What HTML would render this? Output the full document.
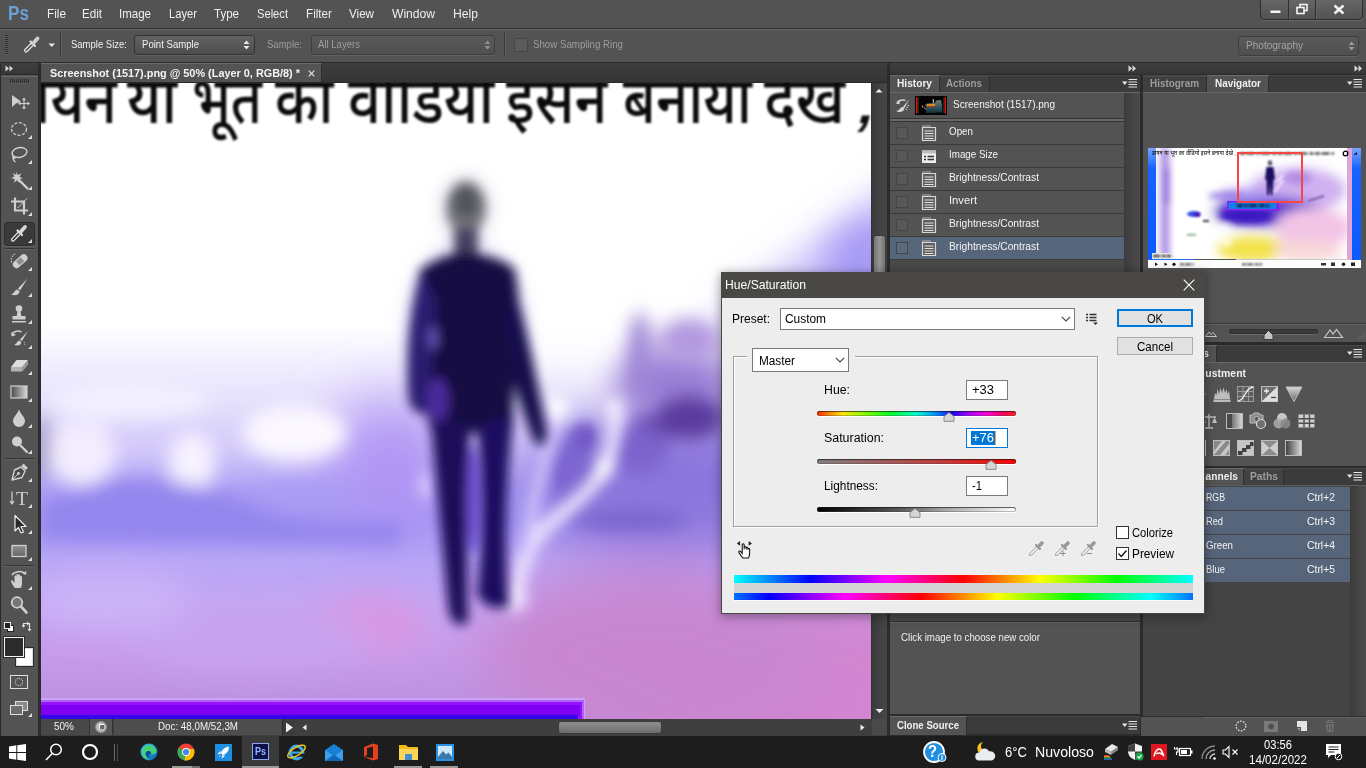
<!DOCTYPE html>
<html lang="en">
<head>
<meta charset="utf-8">
<title>Photoshop - Hue/Saturation</title>
<style>
*{box-sizing:border-box;margin:0;padding:0}
html,body{width:1366px;height:768px;overflow:hidden;background:#535353}
body{position:relative;font-family:"Liberation Sans","Noto Sans Devanagari","Noto Sans Devanagari UI","Lohit Devanagari","FreeSans",sans-serif;font-size:11px;color:#e4e4e4;-webkit-font-smoothing:antialiased}
.a{position:absolute}
.t{position:absolute;white-space:nowrap;line-height:1;transform-origin:0 0}
svg{position:absolute;overflow:visible}
/* ---------- menu bar ---------- */
#menubar{left:0;top:0;width:1366px;height:28px;background:#535353}
#menubar .m{font-size:13px;color:#efefef;top:7px}
#winctl{left:1260px;top:-1px;width:103px;height:21px;border:1px solid #2e2e2e;border-radius:0 0 4px 4px;background:linear-gradient(#666,#525252);box-shadow:0 1px 0 #686868}
/* ---------- options bar ---------- */
#optbar{left:0;top:28px;width:1366px;height:35px;background:#535353;border-top:1px solid #2f2f2f;border-bottom:1px solid #2b2b2b;box-shadow:inset 0 1px 0 #6a6a6a}
.dd{position:absolute;height:20px;border:1px solid #333;border-radius:3px;background:linear-gradient(#636363,#4c4c4c);box-shadow:0 1px 0 #626262}
.dd.dis{background:linear-gradient(#5a5a5a,#4f4f4f);border-color:#3e3e3e}
/* ---------- doc area ---------- */
#tabrow{left:39px;top:63px;width:848px;height:20px;background:linear-gradient(#3d3d3d,#353535)}
#doctab{left:41px;top:63px;width:281px;height:20px;background:#535353;border-top:1px solid #6e6e6e;border-right:1px solid #2e2e2e}
#canvas{left:41px;top:83px;width:830px;height:636px;background:#fff;overflow:hidden}
#vscroll{left:871px;top:83px;width:16px;height:636px;background:linear-gradient(90deg,#2f2f2f 0,#3c3c3c 2px,#474747 100%)}
#status{left:39px;top:719px;width:848px;height:17px;background:#3f3f3f}
/* ---------- toolbar ---------- */
#tools{left:0;top:62px;width:41px;height:674px;background:#2b2b2b}
#tools .in{left:1px;top:1px;width:37px;height:673px;background:#535353}
#tools .hd{left:1px;top:1px;width:37px;height:12px;background:linear-gradient(#3f3f3f,#383838);border-bottom:1px solid #2c2c2c}
/* ---------- taskbar ---------- */
#taskbar{left:0;top:736px;width:1366px;height:32px;background:#1d1d1d}
#taskbar .t{color:#fff}
/* ---------- panels ---------- */
.strip{position:absolute;height:11px;background:linear-gradient(#3e3e3e,#363636)}
/* ---------- dialog ---------- */
.inp{position:absolute;background:#fff;border:1px solid #7a7a7a}
.btn{position:absolute;background:#e1e1e1;border:1px solid #adadad}
</style>
</head>
<body>
<div class="a" id="menubar">
  <span class="t" id="ps" style="left:8px;top:3px;font-size:20px;font-weight:bold;color:#6c9fd4;width:21px;transform:scaleX(0.8582)">Ps</span>
  <span class="t m" style="left:47px;width:19px;transform:scaleX(0.9068)">File</span>
  <span class="t m" style="left:82px;width:20px;transform:scaleX(0.8926)">Edit</span>
  <span class="t m" style="left:119px;width:32px;transform:scaleX(0.8854)">Image</span>
  <span class="t m" style="left:169px;width:28px;transform:scaleX(0.8607)">Layer</span>
  <span class="t m" style="left:214px;width:25px;transform:scaleX(0.8869)">Type</span>
  <span class="t m" style="left:257px;width:31px;transform:scaleX(0.8578)">Select</span>
  <span class="t m" style="left:306px;width:26px;transform:scaleX(0.8999)">Filter</span>
  <span class="t m" style="left:349px;width:25px;transform:scaleX(0.8944)">View</span>
  <span class="t m" style="left:392px;width:43px;transform:scaleX(0.9297)">Window</span>
  <span class="t m" style="left:453px;width:25px;transform:scaleX(0.9346)">Help</span>
  <div class="a" id="winctl">
    <div class="a" style="left:27px;top:0;width:1px;height:19px;background:#2e2e2e;box-shadow:1px 0 0 #646464"></div>
    <div class="a" style="left:54px;top:0;width:1px;height:19px;background:#2e2e2e;box-shadow:1px 0 0 #646464"></div>
    <svg style="left:0;top:0" width="102" height="20" viewBox="0 0 102 20">
      <rect x="9.500" y="10.500" width="10" height="2.500" fill="#f4f4f4"/>
      <rect x="39" y="4.500" width="7" height="6" fill="none" stroke="#f4f4f4" stroke-width="1.600"/>
      <rect x="36" y="7.500" width="7" height="6" fill="#555" stroke="#f4f4f4" stroke-width="1.600"/>
      <path d="M73.500 5.500 L82.500 13.500 M82.500 5.500 L73.500 13.500" stroke="#f4f4f4" stroke-width="2.400" fill="none"/>
    </svg>
  </div>
</div>
<div class="a" id="optbar">
  <!-- grip -->
  <div class="a" style="left:5px;top:6px;width:3px;height:20px;background:repeating-linear-gradient(#2e2e2e 0,#2e2e2e 1px,#5e5e5e 1px,#5e5e5e 2px)"></div>
  <!-- eyedropper -->
  <svg style="left:22px;top:6px" width="20" height="20" viewBox="0 0 20 20">
    <path d="M3.200 16.800 L2.500 15 L9.500 8 L11.500 10 L4.500 17 Z" fill="#4b4b4b" stroke="#e6e6e6" stroke-width="1.200" stroke-linejoin="round"/>
    <path d="M8.500 6.500 L13 11" stroke="#dcdcdc" stroke-width="2.200" stroke-linecap="round"/>
    <path d="M11 8.500 L15.500 3.500" stroke="#cfcfcf" stroke-width="3.800" stroke-linecap="round"/>
  </svg>
  <svg style="left:48px;top:14px" width="8" height="5" viewBox="0 0 8 5"><path d="M0.500 0.500 L7 0.500 L3.750 4 Z" fill="#e8e8e8"/></svg>
  <div class="a" style="left:60px;top:4px;width:1px;height:24px;background:#3a3a3a;box-shadow:1px 0 0 #606060"></div>
  <span class="t" style="left:71px;top:10px;font-size:11px;color:#f0f0f0;width:56px;transform:scaleX(0.8640)">Sample Size:</span>
  <div class="dd" style="left:134px;top:6px;width:121px"></div>
  <span class="t" style="left:142px;top:10px;font-size:11px;color:#f0f0f0;width:57px;transform:scaleX(0.8711)">Point Sample</span>
  <svg style="left:243px;top:11px" width="7" height="10" viewBox="0 0 7 10"><path d="M0.500 4 L3.500 0.500 L6.500 4 Z M0.500 6 L3.500 9.500 L6.500 6 Z" fill="#e8e8e8"/></svg>
  <span class="t" style="left:267px;top:10px;font-size:11px;color:#9d9d9d;width:35px;transform:scaleX(0.8672)">Sample:</span>
  <div class="dd dis" style="left:311px;top:6px;width:184px"></div>
  <span class="t" style="left:318px;top:10px;font-size:11px;color:#9d9d9d;width:42px;transform:scaleX(0.8696)">All Layers</span>
  <svg style="left:484px;top:11px" width="7" height="10" viewBox="0 0 7 10"><path d="M0.500 4 L3.500 0.500 L6.500 4 Z M0.500 6 L3.500 9.500 L6.500 6 Z" fill="#8f8f8f"/></svg>
  <div class="a" style="left:504px;top:4px;width:1px;height:24px;background:#3a3a3a;box-shadow:1px 0 0 #606060"></div>
  <div class="a" style="left:514px;top:9px;width:14px;height:14px;border:1px solid #464646;border-radius:2px;background:#5b5b5b"></div>
  <span class="t" style="left:533px;top:10px;font-size:11px;color:#9d9d9d;width:90px;transform:scaleX(0.8813)">Show Sampling Ring</span>
  <div class="dd dis" style="left:1238px;top:7px;width:121px"></div>
  <span class="t" style="left:1246px;top:11px;font-size:11px;color:#a4a4a4;width:57px;transform:scaleX(0.9136)">Photography</span>
  <svg style="left:1348px;top:12px" width="7" height="10" viewBox="0 0 7 10"><path d="M0.500 4 L3.500 0.500 L6.500 4 Z M0.500 6 L3.500 9.500 L6.500 6 Z" fill="#9a9a9a"/></svg>
</div>
<div class="a" id="tabrow"></div>
<div class="a" id="doctab">
  <span class="t" style="left:9px;top:4px;font-size:11px;font-weight:bold;color:#f4f4f4;width:250px;transform:scaleX(0.9889)">Screenshot (1517).png @ 50% (Layer 0, RGB/8) *</span>
  <svg style="left:267px;top:6px" width="7" height="7" viewBox="0 0 7 7"><path d="M0.700 0.700 L6.300 6.300 M6.300 0.700 L0.700 6.300" stroke="#e4e4e4" stroke-width="1.150"/></svg>
</div>
<div class="a" style="left:39px;top:82px;width:848px;height:1px;background:#282828"></div>
<div class="a" id="canvas">
<!--ART_BEGIN-->
<svg style="left:0;top:0" width="830" height="636" viewBox="41 83 830 636">
  <defs>
    <linearGradient id="bgv" x1="0" y1="83" x2="0" y2="719" gradientUnits="userSpaceOnUse">
      <stop offset="0" stop-color="#ffffff"/>
      <stop offset="0.380" stop-color="#ffffff"/>
      <stop offset="0.435" stop-color="#f3f0ff"/>
      <stop offset="0.500" stop-color="#e6e0fc"/>
      <stop offset="0.577" stop-color="#d2c8fa"/>
      <stop offset="0.640" stop-color="#aea0f4"/>
      <stop offset="0.690" stop-color="#a496f3"/>
      <stop offset="0.750" stop-color="#b8a6f6"/>
      <stop offset="0.815" stop-color="#c4a6f3"/>
      <stop offset="0.890" stop-color="#c89cea"/>
      <stop offset="0.970" stop-color="#bd92e2"/>
      <stop offset="1" stop-color="#bd92e2"/>
    </linearGradient>
    <linearGradient id="tr" x1="765" y1="160" x2="868" y2="296" gradientUnits="userSpaceOnUse">
      <stop offset="0" stop-color="#b0a0f6" stop-opacity="0"/>
      <stop offset="0.500" stop-color="#c4b6fa" stop-opacity=".5"/>
      <stop offset="1" stop-color="#a494f4" stop-opacity="1"/>
    </linearGradient>
    <filter id="b30" x="-50%" y="-50%" width="200%" height="200%"><feGaussianBlur stdDeviation="30"/></filter>
    <filter id="b18" x="-50%" y="-50%" width="200%" height="200%"><feGaussianBlur stdDeviation="16"/></filter>
    <filter id="b10" x="-50%" y="-50%" width="200%" height="200%"><feGaussianBlur stdDeviation="9"/></filter>
    <filter id="b6" x="-50%" y="-50%" width="200%" height="200%"><feGaussianBlur stdDeviation="5.500"/></filter>
    <filter id="b7" x="-50%" y="-50%" width="200%" height="200%"><feGaussianBlur stdDeviation="7"/></filter>
  </defs>
  <rect x="41" y="83" width="830" height="636" fill="url(#bgv)"/>
  <!-- large soft colour fields -->
  <g filter="url(#b30)">
    <ellipse cx="790" cy="690" rx="230" ry="100" fill="#d285d0"/>
    <ellipse cx="650" cy="655" rx="170" ry="90" fill="#c886d0"/>
    <ellipse cx="670" cy="480" rx="150" ry="65" fill="#8a74dc"/>
    <ellipse cx="620" cy="270" rx="150" ry="100" fill="#ffffff"/>
    <ellipse cx="390" cy="470" rx="60" ry="70" fill="#b094f4"/>
  </g>
  <polygon points="880,185 910,185 910,340 720,340 720,305" fill="url(#tr)" filter="url(#b18)"/>
  <ellipse cx="880" cy="262" rx="52" ry="42" fill="#a79bf5" filter="url(#b18)"/>
  <g filter="url(#b18)">
    <ellipse cx="675" cy="385" rx="60" ry="40" fill="#9a7ed6"/>
    <ellipse cx="110" cy="600" rx="80" ry="28" fill="#ccb4f8"/>
    <ellipse cx="370" cy="625" rx="55" ry="28" fill="#d896e2"/>
    <ellipse cx="250" cy="640" rx="120" ry="26" fill="#c8a4f0"/>
  </g>
  <g filter="url(#b10)">
    <ellipse cx="295" cy="433" rx="52" ry="28" fill="#fbf8ff"/>
    <ellipse cx="192" cy="462" rx="24" ry="30" fill="#f6f2ff"/>
    <ellipse cx="82" cy="452" rx="34" ry="34" fill="#f2ecff"/>
    <ellipse cx="130" cy="400" rx="80" ry="18" fill="#f3f0ff"/>
    <path d="M41 505 Q90 478 150 480 Q210 484 270 512 Q320 528 400 520 L400 545 L41 540 Z" fill="#9486ee"/>
    <ellipse cx="300" cy="497" rx="55" ry="12" fill="#a99cf4"/>
    <ellipse cx="42" cy="447" rx="7" ry="32" fill="#8e86b4"/>
  </g>
  <!-- distant shapes right of figure -->
  <g filter="url(#b10)">
    <ellipse cx="650" cy="432" rx="20" ry="18" fill="#6a4ab0"/>
    <ellipse cx="690" cy="418" rx="34" ry="22" fill="#5a3a9e"/>
    <ellipse cx="640" cy="352" rx="11" ry="40" fill="#9c84d4"/>
    <ellipse cx="690" cy="340" rx="30" ry="22" fill="#b49ae0"/>
    <ellipse cx="630" cy="520" rx="60" ry="10" fill="#7464cc"/>
    <ellipse cx="575" cy="470" rx="22" ry="40" fill="#7b66d2"/>
    <ellipse cx="640" cy="450" rx="30" ry="22" fill="#7a62cc"/>
  </g>
  <g filter="url(#b7)">
    <path d="M616 408 Q614 445 606 466 Q590 492 566 510 Q540 530 530 548 Q520 568 516 594" fill="none" stroke="#ece4ff" stroke-width="14" stroke-linecap="round"/>
    <path d="M558 410 Q548 450 536 492 Q530 520 527 548" fill="none" stroke="#d8caff" stroke-width="10" stroke-linecap="round"/>
    <ellipse cx="604" cy="468" rx="9" ry="12" fill="#ffffff"/>
    <ellipse cx="557" cy="408" rx="10" ry="12" fill="#ffffff"/>
    <ellipse cx="614" cy="408" rx="9" ry="10" fill="#f6f0ff"/>
    <ellipse cx="426" cy="486" rx="6" ry="13" fill="#dccfff"/>
    <ellipse cx="514" cy="598" rx="13" ry="14" fill="#efe4ff"/>
    <ellipse cx="585" cy="437" rx="13" ry="14" fill="#6f54c4"/>
    <ellipse cx="562" cy="470" rx="9" ry="16" fill="#7d62d0"/>
  </g>
  <!-- figure -->
  <g filter="url(#b10)">
    <ellipse cx="466" cy="208" rx="27" ry="34" fill="#e9e9f2"/>
    <ellipse cx="466" cy="330" rx="62" ry="90" fill="#cfc6f4" opacity=".55"/>
  </g>
  <g filter="url(#b6)">
    <ellipse cx="466" cy="208" rx="20" ry="27" fill="#74747e"/>
    <ellipse cx="466" cy="202" rx="13" ry="16" fill="#55555f"/>
    <path d="M454 228 h24 v30 h-24 Z" fill="#45415f"/>
    <path d="M454 254 Q466 250 478 254 Q500 258 514 268 Q522 300 516 350 L512 425 Q490 436 466 432 Q440 436 428 425 L424 350 Q414 300 420 270 Q436 258 454 254 Z" fill="#120a42"/>
    <path d="M421 270 Q404 325 408 398 Q414 420 430 412 L436 300 Z" fill="#2a1c70"/>
    <path d="M509 268 Q526 320 546 428 Q548 448 536 444 Q514 400 502 320 Z" fill="#170e4c"/>
    <path d="M430 415 Q440 520 448 606 Q452 632 468 622 Q466 520 470 425 Z" fill="#1a0f58"/>
    <path d="M477 425 Q486 520 477 594 Q486 612 509 607 Q501 520 514 415 Z" fill="#1c1060"/>
    <ellipse cx="473" cy="500" rx="6" ry="55" fill="#6e50d6"/>
    <ellipse cx="433" cy="338" rx="4" ry="12" fill="#6a58c0"/>
    <ellipse cx="438" cy="400" rx="11" ry="22" fill="#4a2a9c"/>
  </g>
  <!-- bottom violet strip -->
  <rect x="41" y="698" width="544" height="21" fill="#caa4f6"/>
  <rect x="41" y="700" width="543" height="19" fill="#b060fc"/>
  <rect x="41" y="702" width="541" height="17" fill="#9412fc"/>
  <rect x="41" y="705" width="539" height="10" fill="#8000f4"/>
  <rect x="41" y="715" width="537" height="4" fill="#3008ea"/>
</svg>
<div class="a" id="hindi" style="left:0;top:0;width:830px;height:70px;color:#0b0b0b;font-size:64px;font-weight:480;filter:blur(1px)">
 <span class="t" style="left:-37px;top:-15px;--sy:1.02;width:113px;transform:scale(0.8903,1.02)">डायन</span>
 <span class="t" style="left:86.0px;top:-15px;--sy:1.02;width:50px;transform:scale(0.9029,1.02)">या</span>
 <span class="t" style="left:151.0px;top:-15px;--sy:1.02;width:70px;transform:scale(0.8343,1.02)">भूत</span>
 <span class="t" style="left:233.6px;top:-15px;--sy:1.02;width:58.4px;transform:scale(0.8648,1.02)">का</span>
 <span class="t" style="left:307.0px;top:-15px;--sy:1.02;width:146px;transform:scale(0.9060,1.02)">वीडियो</span>
 <span class="t" style="left:464.5px;top:-15px;--sy:1.02;width:101.5px;transform:scale(0.8975,1.02)">इसने</span>
 <span class="t" style="left:581.5px;top:-15px;--sy:1.02;width:129px;transform:scale(0.8793,1.02)">बनाया</span>
 <span class="t" style="left:723.0px;top:-15px;--sy:1.02;width:81px;transform:scale(0.9205,1.02)">देखे</span>
 <span class="t" style="left:828px;top:-19px;font-size:70px;transform:skewX(-16deg) scaleX(1.2)">,</span>
</div>
<!--ART_END-->
</div>
<div class="a" id="vscroll">
  <svg style="left:4px;top:5px" width="8" height="5" viewBox="0 0 8 5"><path d="M0.500 4.500 L4 1 L7.500 4.500 Z" fill="#f0f0f0"/></svg>
  <div class="a" style="left:2px;top:152px;width:13px;height:60px;border-radius:3px;background:linear-gradient(90deg,#767676,#959595 50%,#747474);border:1px solid #3a3a3a"></div>
  <svg style="left:4px;top:625px" width="9" height="6" viewBox="0 0 9 6"><path d="M0.500 1 L4.500 5 L8.500 1 Z" fill="#f0f0f0"/></svg>
</div>
<div class="a" id="status">
  <div class="a" style="left:2px;top:0;width:48px;height:16px;background:#484848"></div>
  <span class="t" style="left:15px;top:3px;font-size:10px;color:#f2f2f2;width:20px;transform:scaleX(0.9992)">50%</span>
  <div class="a" style="left:50px;top:0;width:24px;height:16px;background:#565656;border-left:1px solid #333;border-right:1px solid #333"></div>
  <div class="a" style="left:56px;top:2px;width:12px;height:12px;border-radius:50%;background:#b9b9b9;border:1px solid #8a8a8a"></div>
  <div class="a" style="left:60px;top:5px;width:5px;height:5px;background:#6a6a6a;border-top:1px solid #fff;border-left:1px solid #fff"></div>
  <div class="a" style="left:75px;top:0;width:168px;height:16px;background:#4d4d4d"></div>
  <span class="t" style="left:119px;top:3px;font-size:10px;color:#f2f2f2;width:80px;transform:scaleX(0.9790)">Doc: 48,0M/52,3M</span>
  <div class="a" style="left:243px;top:0;width:13px;height:16px;background:#3b3b3b;border-left:1px solid #2a2a2a"></div>
  <svg style="left:246px;top:3px" width="9" height="11" viewBox="0 0 9 11"><path d="M1 0.500 L8 5.500 L1 10.500 Z" fill="#f2f2f2"/></svg>
  <svg style="left:263px;top:5px" width="5" height="7" viewBox="0 0 5 7"><path d="M4.500 0.500 L0.500 3.500 L4.500 6.500 Z" fill="#f0f0f0"/></svg>
  <div class="a" style="left:519px;top:2px;width:104px;height:13px;border-radius:3px;background:linear-gradient(#8e8e8e,#6c6c6c);border:1px solid #3a3a3a"></div>
  <svg style="left:821px;top:5px" width="5" height="7" viewBox="0 0 5 7"><path d="M0.500 0.500 L4.500 3.500 L0.500 6.500 Z" fill="#f0f0f0"/></svg>
  <div class="a" style="left:833px;top:0;width:15px;height:16px;background:#4a4a4a"></div>
</div>
<div class="a" id="tools">
 <div class="a in"></div>
 <div class="a hd"></div>
 <div class="a" style="left:1px;top:14px;width:37px;height:1px;background:#6a6a6a"></div>
 <svg style="left:5px;top:3px" width="9" height="7" viewBox="0 0 9 7"><path d="M0.500 0.500 L4 3.500 L0.500 6.500 Z M4.500 0.500 L8 3.500 L4.500 6.500 Z" fill="#d8d8d8"/></svg>
 <div class="a" style="left:10px;top:17px;width:20px;height:4px;background:repeating-linear-gradient(90deg,#2e2e2e 0,#2e2e2e 1px,transparent 1px,transparent 2px);box-shadow:0 1px 0 rgba(255,255,255,.08)"></div>
 <div class="a" style="left:4px;top:160px;width:31px;height:24px;border-radius:3px;background:#3a3a3a;border:1px solid #2c2c2c;box-shadow:0 1px 0 #666"></div>
 <div class="a" style="left:5px;top:186px;width:29px;height:1px;background:#333;box-shadow:0 1px 0 #626262"></div>
 <div class="a" style="left:5px;top:396px;width:29px;height:1px;background:#333;box-shadow:0 1px 0 #626262"></div>
 <div class="a" style="left:5px;top:503px;width:29px;height:1px;background:#333;box-shadow:0 1px 0 #626262"></div>
 <svg style="left:7px;top:28px" width="24" height="24" viewBox="0 0 24 24"><path d="M5 5 L5 17 L9 13.500 L14 11.500 Z" fill="#cfcfcf"/><path d="M17 9 v9 M12.500 13.500 h9" stroke="#cfcfcf" stroke-width="1.200" fill="none"/><path d="M17 7.500 l-2 2.500 h4 Z M17 19.500 l-2 -2.500 h4 Z M11 13.500 l2.500 -2 v4 Z M23 13.500 l-2.500 -2 v4 Z" fill="#cfcfcf"/></svg>
 <svg style="left:7px;top:55px" width="24" height="24" viewBox="0 0 24 24"><ellipse cx="12" cy="12" rx="7.500" ry="6.300" fill="none" stroke="#cfcfcf" stroke-width="1.300" stroke-dasharray="3 1.600"/></svg>
 <svg style="left:28px;top:73px" width="4" height="4" viewBox="0 0 4 4"><path d="M4 0 V4 H0 Z" fill="#dcdcdc"/></svg>
 <svg style="left:7px;top:80px" width="24" height="24" viewBox="0 0 24 24"><ellipse cx="12.500" cy="10.500" rx="7.500" ry="4.800" fill="none" stroke="#cfcfcf" stroke-width="1.500" transform="rotate(-12 12.500 10.500)"/><path d="M7 13.500 c-2.500 1.500 -1 3.500 0.500 3 c1.500 -0.500 0 -2.500 -1 -1 c-0.800 1.500 0.500 3.500 2 4.500" fill="none" stroke="#cfcfcf" stroke-width="1.200"/></svg>
 <svg style="left:28px;top:98px" width="4" height="4" viewBox="0 0 4 4"><path d="M4 0 V4 H0 Z" fill="#dcdcdc"/></svg>
 <svg style="left:7px;top:106px" width="24" height="24" viewBox="0 0 24 24"><path d="M12 12 L20.500 20.500" stroke="#cfcfcf" stroke-width="2.400" stroke-linecap="round"/><path d="M9.500 3.500 l1.200 3.600 l3.600 -1.600 l-1.800 3.300 l3.500 1.700 l-3.800 0.600 l0.400 3.900 l-2.700 -2.800 l-2.900 2.600 l0.800 -3.800 l-3.800 -0.900 l3.500 -1.500 l-1.700 -3.500 l3.400 1.800 Z" fill="#cfcfcf"/></svg>
 <svg style="left:28px;top:124px" width="4" height="4" viewBox="0 0 4 4"><path d="M4 0 V4 H0 Z" fill="#dcdcdc"/></svg>
 <svg style="left:7px;top:132px" width="24" height="24" viewBox="0 0 24 24"><path d="M8 3.500 V16.500 H21 M4 7.500 H17 V20.500" fill="none" stroke="#cfcfcf" stroke-width="2.200"/><path d="M10.500 14 L20 4.500" stroke="#cfcfcf" stroke-width="1"/></svg>
 <svg style="left:28px;top:150px" width="4" height="4" viewBox="0 0 4 4"><path d="M4 0 V4 H0 Z" fill="#dcdcdc"/></svg>
 <svg style="left:7px;top:159px" width="24" height="24" viewBox="0 0 24 24"><path d="M5 20 L4.500 18.200 L11.500 11 L13.500 13 L6.500 20.200 Z" fill="#3a3a3a" stroke="#ececec" stroke-width="1.200" stroke-linejoin="round"/><path d="M10.500 9.500 L15 14" stroke="#e0e0e0" stroke-width="2.200" stroke-linecap="round"/><path d="M13.500 11 L18 6" stroke="#d6d6d6" stroke-width="3.800" stroke-linecap="round"/></svg>
 <svg style="left:28px;top:177px" width="4" height="4" viewBox="0 0 4 4"><path d="M4 0 V4 H0 Z" fill="#dcdcdc"/></svg>
 <svg style="left:7px;top:187px" width="24" height="24" viewBox="0 0 24 24"><g transform="rotate(-42 13 12)"><rect x="4.500" y="8.500" width="17" height="7.500" rx="3.500" fill="#cfcfcf"/><rect x="10" y="9.500" width="6" height="5.500" fill="#8e8e8e"/></g><path d="M8 5 a5 6 0 0 0 -3 9" fill="none" stroke="#cfcfcf" stroke-width="1.200" stroke-dasharray="1.500 1.300"/></svg>
 <svg style="left:28px;top:205px" width="4" height="4" viewBox="0 0 4 4"><path d="M4 0 V4 H0 Z" fill="#dcdcdc"/></svg>
 <svg style="left:7px;top:213px" width="24" height="24" viewBox="0 0 24 24"><path d="M20.500 3.500 L11 13.500 L13 15.500 Z" fill="#cfcfcf"/><path d="M10.500 14.500 c-3 0.500 -3 4 -6.500 5 c4 1.500 8.500 0.500 8.500 -3 Z" fill="#cfcfcf"/></svg>
 <svg style="left:28px;top:231px" width="4" height="4" viewBox="0 0 4 4"><path d="M4 0 V4 H0 Z" fill="#dcdcdc"/></svg>
 <svg style="left:7px;top:240px" width="24" height="24" viewBox="0 0 24 24"><circle cx="12" cy="6.500" r="3.300" fill="#cfcfcf"/><path d="M10.500 9 h3 l0.800 5 h4.200 v3.500 h-13 v-3.500 h4.200 Z" fill="#cfcfcf"/><rect x="5" y="19" width="14" height="1.500" fill="#cfcfcf"/></svg>
 <svg style="left:28px;top:258px" width="4" height="4" viewBox="0 0 4 4"><path d="M4 0 V4 H0 Z" fill="#dcdcdc"/></svg>
 <svg style="left:7px;top:265px" width="24" height="24" viewBox="0 0 24 24"><path d="M21 4 L13 12.500 L14.800 14.200 Z" fill="#cfcfcf"/><path d="M12.500 13.500 c-2.500 0.500 -2.500 3.500 -5.500 4.300 c3.500 1.300 7.300 0.400 7.300 -2.600 Z" fill="#cfcfcf"/><path d="M5 8.500 a6 5 0 0 1 9.500 -3.500" fill="none" stroke="#cfcfcf" stroke-width="1.500"/><path d="M4 5 l1 4.500 l4 -1.500 Z" fill="#cfcfcf"/><path d="M17 15 l1.500 4" stroke="#cfcfcf" stroke-width="1" stroke-dasharray="1 1"/></svg>
 <svg style="left:28px;top:283px" width="4" height="4" viewBox="0 0 4 4"><path d="M4 0 V4 H0 Z" fill="#dcdcdc"/></svg>
 <svg style="left:7px;top:291px" width="24" height="24" viewBox="0 0 24 24"><path d="M9.500 7 H21 L15.500 14 H4 Z" fill="#dedede"/><path d="M4 14 H15.500 V18.500 H4 Z" fill="#b3b3b3"/><path d="M15.500 14 L21 7 V11.500 L15.500 18.500 Z" fill="#9b9b9b"/></svg>
 <svg style="left:28px;top:309px" width="4" height="4" viewBox="0 0 4 4"><path d="M4 0 V4 H0 Z" fill="#dcdcdc"/></svg>
 <svg style="left:7px;top:318px" width="24" height="24" viewBox="0 0 24 24"><defs><linearGradient id="tg1" x1="0" y1="0" x2="1" y2="0"><stop offset="0" stop-color="#4a4a4a"/><stop offset="1" stop-color="#d8d8d8"/></linearGradient></defs><rect x="4" y="6" width="16" height="12" fill="url(#tg1)" stroke="#cfcfcf" stroke-width="1.200"/></svg>
 <svg style="left:28px;top:336px" width="4" height="4" viewBox="0 0 4 4"><path d="M4 0 V4 H0 Z" fill="#dcdcdc"/></svg>
 <svg style="left:7px;top:344px" width="24" height="24" viewBox="0 0 24 24"><path d="M12 3.500 C13.500 8 18 11 18 15 a6 6 0 0 1 -12 0 C6 11 10.500 8 12 3.500 Z" fill="#cfcfcf"/></svg>
 <svg style="left:28px;top:362px" width="4" height="4" viewBox="0 0 4 4"><path d="M4 0 V4 H0 Z" fill="#dcdcdc"/></svg>
 <svg style="left:7px;top:370px" width="24" height="24" viewBox="0 0 24 24"><circle cx="10" cy="9.500" r="5" fill="#cfcfcf"/><path d="M13.500 13.500 L20 20" stroke="#cfcfcf" stroke-width="2.400" stroke-linecap="round"/></svg>
 <svg style="left:28px;top:388px" width="4" height="4" viewBox="0 0 4 4"><path d="M4 0 V4 H0 Z" fill="#dcdcdc"/></svg>
 <svg style="left:7px;top:398px" width="24" height="24" viewBox="0 0 24 24"><path d="M16.500 3.500 L21 8 L18.500 10 L14.500 6 Z" fill="#cfcfcf"/><path d="M14 7 L18 11 L15 17.500 L5 20 L7.500 10 Z" fill="#4a4a4a" stroke="#cfcfcf" stroke-width="1.400" stroke-linejoin="round"/><path d="M5.500 19.500 L11 14" stroke="#cfcfcf" stroke-width="1"/><circle cx="11.500" cy="13.500" r="1.400" fill="#cfcfcf"/></svg>
 <svg style="left:28px;top:416px" width="4" height="4" viewBox="0 0 4 4"><path d="M4 0 V4 H0 Z" fill="#dcdcdc"/></svg>
 <svg style="left:7px;top:424px" width="24" height="24" viewBox="0 0 24 24"><path d="M5 5.500 v12 M3 15 l2 3 l2 -3" fill="none" stroke="#cfcfcf" stroke-width="1.200"/></svg>
 <span class="t" style="left:16px;top:427px;font-family:'Liberation Serif',serif;font-size:19px;color:#cfcfcf;width:12px;transform:scaleX(1.0336)">T</span>
 <svg style="left:28px;top:442px" width="4" height="4" viewBox="0 0 4 4"><path d="M4 0 V4 H0 Z" fill="#dcdcdc"/></svg>
 <svg style="left:7px;top:450px" width="24" height="24" viewBox="0 0 24 24"><path d="M8 3.500 L8 19 L11.500 15.500 L14 21 L16.500 20 L14 14.500 L19 14.500 Z" fill="#2a2a2a" stroke="#e8e8e8" stroke-width="1.200" stroke-linejoin="round"/></svg>
 <svg style="left:28px;top:468px" width="4" height="4" viewBox="0 0 4 4"><path d="M4 0 V4 H0 Z" fill="#dcdcdc"/></svg>
 <svg style="left:7px;top:477px" width="24" height="24" viewBox="0 0 24 24"><defs><linearGradient id="tg2" x1="0" y1="0" x2="0" y2="1"><stop offset="0" stop-color="#8e8e8e"/><stop offset="1" stop-color="#666"/></linearGradient></defs><rect x="5" y="6.500" width="14" height="11" fill="url(#tg2)" stroke="#cfcfcf" stroke-width="1.300"/></svg>
 <svg style="left:28px;top:495px" width="4" height="4" viewBox="0 0 4 4"><path d="M4 0 V4 H0 Z" fill="#dcdcdc"/></svg>
 <svg style="left:7px;top:506px" width="24" height="24" viewBox="0 0 24 24"><path d="M8 20 c-2 -2.500 -3.500 -5 -4 -6.500 c-0.300 -1.300 1.200 -1.800 2 -0.500 l1.500 2 V8.500 c0 -1.400 1.900 -1.400 1.900 0 V7 c0 -1.400 1.900 -1.400 1.900 0 V7.500 c0 -1.400 1.900 -1.400 1.900 0 V9 c0 -1.300 1.800 -1.300 1.800 0 V15.500 c0 2 -0.800 3.500 -1.500 4.500 Z" fill="#cfcfcf"/><path d="M5 7 a8 6 0 0 1 13 -1.500" fill="none" stroke="#cfcfcf" stroke-width="1.500"/><path d="M19.500 3 l-0.500 4 l-3.500 -1.500 Z" fill="#cfcfcf"/></svg>
 <svg style="left:28px;top:524px" width="4" height="4" viewBox="0 0 4 4"><path d="M4 0 V4 H0 Z" fill="#dcdcdc"/></svg>
 <svg style="left:7px;top:531px" width="24" height="24" viewBox="0 0 24 24"><circle cx="10" cy="9.500" r="5.300" fill="#777" stroke="#cfcfcf" stroke-width="1.700"/><path d="M14 13.500 L19.500 19.500" stroke="#cfcfcf" stroke-width="2.600" stroke-linecap="round"/></svg>
 <div class="a" style="left:7px;top:563px;width:7px;height:7px;background:#fff;border:1px solid #222"></div>
 <div class="a" style="left:4px;top:560px;width:7px;height:7px;background:#222;border:1px solid #e6e6e6"></div>
 <svg style="left:21px;top:559px" width="11" height="11" viewBox="0 0 11 11"><path d="M2.500 5 V2.500 H7 M8.500 6 V8.500" fill="none" stroke="#e0e0e0" stroke-width="1.200"/><path d="M2.500 6.800 L0.500 4.300 h4 Z M8.500 10.500 L6.500 8 h4 Z M6 0.500 L8.500 2.500 L6 4.500 Z" fill="#e0e0e0"/><path d="M7 2.500 H8.500 V6" fill="none" stroke="#e0e0e0" stroke-width="1.200"/></svg>
 <div class="a" style="left:15px;top:585px;width:19px;height:20px;background:#fff;border:1px solid #2a2a2a;box-shadow:0 0 0 1px #ddd inset"></div>
 <div class="a" style="left:4px;top:575px;width:20px;height:20px;background:#2b2b2b;border:1px solid #f2f2f2;box-shadow:0 0 0 1px #2a2a2a"></div>
 <div class="a" style="left:10px;top:613px;width:18px;height:14px;border:1px solid #e0e0e0;background:#545454"></div>
 <div class="a" style="left:15px;top:616px;width:8px;height:8px;border:1px dotted #e8e8e8;border-radius:50%"></div>
 <div class="a" style="left:15px;top:639px;width:13px;height:10px;border:1px solid #e0e0e0;background:#8a8a8a"></div>
 <div class="a" style="left:10px;top:643px;width:13px;height:10px;border:1px solid #e0e0e0;background:#6c6c6c"></div>
 <svg style="left:28px;top:651px" width="4" height="4" viewBox="0 0 4 4"><path d="M4 0 V4 H0 Z" fill="#dcdcdc"/></svg>
</div>
<div class="a" id="dock" style="left:887px;top:62px;width:479px;height:674px;background:#2b2b2b"></div>
<div class="strip" style="left:890px;top:63px;width:476px"></div>
<svg style="left:1128px;top:65px" width="9" height="7" viewBox="0 0 9 7"><path d="M0.500 0.300 L4 3.500 L0.500 6.700 Z M4.500 0.300 L8 3.500 L4.500 6.700 Z" fill="#d8d8d8"/></svg>
<svg style="left:1354px;top:65px" width="9" height="7" viewBox="0 0 9 7"><path d="M0.500 0.300 L4 3.500 L0.500 6.700 Z M4.500 0.300 L8 3.500 L4.500 6.700 Z" fill="#d8d8d8"/></svg>
<div class="a" style="left:890px;top:75px;width:250px;height:17px;background:#3b3b3b;box-shadow:inset 0 1px 0 #474747"></div>
<div class="a" style="left:890px;top:75px;width:50px;height:18px;background:#535353;box-shadow:inset 0 1px 0 #6c6c6c,inset -1px 0 0 #2e2e2e"></div>
<span class="t" style="left:897px;top:78px;font-size:11px;font-weight:bold;color:#f0f0f0;width:35px;transform:scaleX(0.9233)">History</span>
<div class="a" style="left:940px;top:76px;width:50px;height:16px;background:#414141;box-shadow:inset -1px 0 0 #2e2e2e,inset 0 1px 0 #4c4c4c"></div>
<span class="t" style="left:946px;top:78px;font-size:11px;font-weight:bold;color:#9c9c9c;width:36px;transform:scaleX(0.8923)">Actions</span>
<svg style="left:1122px;top:79px" width="15" height="9" viewBox="0 0 15 9"><path d="M0 2.500 h5.500 L2.750 6 Z" fill="#e6e6e6"/><path d="M6.500 0.500 h8.500 M6.500 3 h8.500 M6.500 5.500 h8.500 M6.500 8 h8.500" stroke="#e6e6e6" stroke-width="1"/></svg>
<div class="a" style="left:890px;top:92px;width:250px;height:180px;background:#4a4a4a;border-top:1px solid #686868"></div>
<div class="a" style="left:1124px;top:93px;width:16px;height:179px;background:linear-gradient(90deg,#3c3c3c,#4b4b4b)"></div>
<div class="a" style="left:890px;top:93px;width:234px;height:25px;background:#535353"></div>
<svg style="left:894px;top:97px" width="18" height="18" viewBox="0 0 18 18"><path d="M15.500 2 L8.500 10.500 L10 12 Z" fill="#d6d6d6"/><path d="M8.500 10 c-2 .3 -2.600 2.200 -4 3.200 c-.8 .6 -1.800 .7 -2.500 .6 c1.500 1.600 5 1.800 7 .2 c1 -.9 1.200 -2 .9 -2.600 Z" fill="#d6d6d6"/><path d="M3 5.200 C5.500 3 9 2.600 11.500 3.400" fill="none" stroke="#d6d6d6" stroke-width="1.500"/><path d="M1.500 6.500 L6 3 L5.500 7.300 Z" fill="#d6d6d6"/><path d="M14.500 8 L11.500 14" stroke="#e6e6e6" stroke-width="1.200" stroke-dasharray="1 1.300"/></svg>
<svg style="left:915px;top:96px" width="32" height="19" viewBox="0 0 32 19"><defs><filter id="hb" x="-20%" y="-20%" width="140%" height="140%"><feGaussianBlur stdDeviation=".7"/></filter><linearGradient id="hg" x1="0" y1="0" x2="0" y2="1"><stop offset="0" stop-color="#6f7f6f"/><stop offset=".5" stop-color="#3c5a64"/><stop offset="1" stop-color="#12303c"/></linearGradient></defs><rect width="32" height="19" fill="#040404"/><g filter="url(#hb)"><path d="M10 9 L12 7.500 L20 7 L21 4.500 L26 4 L27 9 L27.500 16.500 L11 17 L11.500 12 Z" fill="url(#hg)"/><rect x="12" y="8.300" width="8" height="1.700" fill="#f2b010"/><rect x="12.500" y="9.600" width="7" height="1" fill="#e02810"/><rect x="17.800" y="3" width=".9" height="4" fill="#f4f4f4"/><circle cx="7.600" cy="10.500" r=".9" fill="#e89020"/><path d="M9 11.500 l2.500 2" stroke="#cfcfcf" stroke-width=".8"/><rect x="2.600" y="1.500" width="1" height="16" fill="#1e3a3a"/><rect x="28.400" y="1.500" width="1" height="16" fill="#1e3a3a"/></g><rect x="1" y="1.200" width="1.400" height="16.300" fill="#e81404"/><rect x="29.600" y="1.200" width="1.400" height="16.300" fill="#e81404"/></svg>
<span class="t" style="left:953px;top:99px;font-size:11px;color:#f4f4f4;width:102px;transform:scaleX(0.9113)">Screenshot (1517).png</span>
<div class="a" style="left:890px;top:118px;width:234px;height:1px;background:#333"></div>
<div class="a" style="left:890px;top:119px;width:234px;height:2px;background:#6a6a6a"></div>
<div class="a" style="left:890px;top:121px;width:234px;height:1px;background:#333"></div>
<div class="a" style="left:890px;top:122px;width:234px;height:22px;background:#535353"></div>
<div class="a" style="left:890px;top:144px;width:234px;height:1px;background:#3a3a3a"></div>
<div class="a" style="left:896px;top:127px;width:12px;height:12px;border:1px solid #454545;background:#585858"></div>
<svg style="left:921px;top:125px" width="16" height="17" viewBox="0 0 16 17"><path d="M1.500 2.500 h9 l4 0 v13 h-13 Z" fill="#5e5e5e" stroke="#d8d8d8" stroke-width="1.200"/><path d="M1 1 h9" stroke="#b0b0b0" stroke-width="1"/><path d="M3.500 6 h9 M3.500 8.500 h9 M3.500 11 h9 M3.500 13.500 h9" stroke="#e0e0e0" stroke-width="1"/></svg>
<span class="t" style="left:949px;top:126px;font-size:11px;color:#f4f4f4;width:24px;transform:scaleX(0.8915)">Open</span>
<div class="a" style="left:890px;top:145px;width:234px;height:22px;background:#535353"></div>
<div class="a" style="left:890px;top:167px;width:234px;height:1px;background:#3a3a3a"></div>
<div class="a" style="left:896px;top:150px;width:12px;height:12px;border:1px solid #454545;background:#585858"></div>
<svg style="left:921px;top:148px" width="16" height="17" viewBox="0 0 16 17"><rect x="1" y="2.500" width="14" height="12.500" fill="#ededed"/><rect x="1" y="2.500" width="14" height="3" fill="#bdbdbd"/><path d="M3 8.500 h2 M6.500 8.500 h6.500 M3 11.500 h2 M6.500 11.500 h6.500" stroke="#333" stroke-width="1.600"/></svg>
<span class="t" style="left:949px;top:149px;font-size:11px;color:#f4f4f4;width:49px;transform:scaleX(0.8904)">Image Size</span>
<div class="a" style="left:890px;top:168px;width:234px;height:22px;background:#535353"></div>
<div class="a" style="left:890px;top:190px;width:234px;height:1px;background:#3a3a3a"></div>
<div class="a" style="left:896px;top:173px;width:12px;height:12px;border:1px solid #454545;background:#585858"></div>
<svg style="left:921px;top:171px" width="16" height="17" viewBox="0 0 16 17"><path d="M1.500 2.500 h9 l4 0 v13 h-13 Z" fill="#5e5e5e" stroke="#d8d8d8" stroke-width="1.200"/><path d="M1 1 h9" stroke="#b0b0b0" stroke-width="1"/><path d="M3.500 6 h9 M3.500 8.500 h9 M3.500 11 h9 M3.500 13.500 h9" stroke="#e0e0e0" stroke-width="1"/></svg>
<span class="t" style="left:949px;top:172px;font-size:11px;color:#f4f4f4;width:90px;transform:scaleX(0.9316)">Brightness/Contrast</span>
<div class="a" style="left:890px;top:191px;width:234px;height:22px;background:#535353"></div>
<div class="a" style="left:890px;top:213px;width:234px;height:1px;background:#3a3a3a"></div>
<div class="a" style="left:896px;top:196px;width:12px;height:12px;border:1px solid #454545;background:#585858"></div>
<svg style="left:921px;top:194px" width="16" height="17" viewBox="0 0 16 17"><path d="M1.500 2.500 h9 l4 0 v13 h-13 Z" fill="#5e5e5e" stroke="#d8d8d8" stroke-width="1.200"/><path d="M1 1 h9" stroke="#b0b0b0" stroke-width="1"/><path d="M3.500 6 h9 M3.500 8.500 h9 M3.500 11 h9 M3.500 13.500 h9" stroke="#e0e0e0" stroke-width="1"/></svg>
<span class="t" style="left:949px;top:195px;font-size:11px;color:#f4f4f4;width:28px;transform:scaleX(1.0176)">Invert</span>
<div class="a" style="left:890px;top:214px;width:234px;height:22px;background:#535353"></div>
<div class="a" style="left:890px;top:236px;width:234px;height:1px;background:#3a3a3a"></div>
<div class="a" style="left:896px;top:219px;width:12px;height:12px;border:1px solid #454545;background:#585858"></div>
<svg style="left:921px;top:217px" width="16" height="17" viewBox="0 0 16 17"><path d="M1.500 2.500 h9 l4 0 v13 h-13 Z" fill="#5e5e5e" stroke="#d8d8d8" stroke-width="1.200"/><path d="M1 1 h9" stroke="#b0b0b0" stroke-width="1"/><path d="M3.500 6 h9 M3.500 8.500 h9 M3.500 11 h9 M3.500 13.500 h9" stroke="#e0e0e0" stroke-width="1"/></svg>
<span class="t" style="left:949px;top:218px;font-size:11px;color:#f4f4f4;width:90px;transform:scaleX(0.9316)">Brightness/Contrast</span>
<div class="a" style="left:890px;top:237px;width:234px;height:22px;background:#56657a"></div>
<div class="a" style="left:890px;top:259px;width:234px;height:1px;background:#3a3a3a"></div>
<div class="a" style="left:896px;top:242px;width:12px;height:12px;border:1px solid #454545;background:#5b6a7e"></div>
<svg style="left:921px;top:240px" width="16" height="17" viewBox="0 0 16 17"><path d="M1.500 2.500 h9 l4 0 v13 h-13 Z" fill="#5e5e5e" stroke="#d8d8d8" stroke-width="1.200"/><path d="M1 1 h9" stroke="#b0b0b0" stroke-width="1"/><path d="M3.500 6 h9 M3.500 8.500 h9 M3.500 11 h9 M3.500 13.500 h9" stroke="#e0e0e0" stroke-width="1"/></svg>
<span class="t" style="left:949px;top:241px;font-size:11px;color:#f4f4f4;width:90px;transform:scaleX(0.9316)">Brightness/Contrast</span>
<div class="a" style="left:890px;top:272px;width:250px;height:350px;background:#4a4a4a"></div>
<div class="a" style="left:890px;top:621px;width:250px;height:1px;background:#2e2e2e"></div>
<div class="a" style="left:890px;top:622px;width:250px;height:92px;background:#535353;box-shadow:inset 0 1px 0 #666"></div>
<span class="t" style="left:901px;top:632px;font-size:11px;color:#f0f0f0;width:139px;transform:scaleX(0.8811)">Click image to choose new color</span>
<div class="a" style="left:890px;top:716px;width:250px;height:18px;background:#3b3b3b;box-shadow:inset 0 1px 0 #474747"></div>
<div class="a" style="left:890px;top:716px;width:77px;height:19px;background:#535353;box-shadow:inset 0 1px 0 #6c6c6c,inset -1px 0 0 #2e2e2e"></div>
<span class="t" style="left:897px;top:720px;font-size:11px;font-weight:bold;color:#f0f0f0;width:62px;transform:scaleX(0.8744)">Clone Source</span>
<svg style="left:1122px;top:721px" width="15" height="9" viewBox="0 0 15 9"><path d="M0 2.500 h5.500 L2.750 6 Z" fill="#e6e6e6"/><path d="M6.500 0.500 h8.500 M6.500 3 h8.500 M6.500 5.500 h8.500 M6.500 8 h8.500" stroke="#e6e6e6" stroke-width="1"/></svg>
<div class="a" style="left:1143px;top:75px;width:223px;height:17px;background:#3b3b3b;box-shadow:inset 0 1px 0 #474747"></div>
<div class="a" style="left:1143px;top:76px;width:64px;height:16px;background:#3f3f3f;box-shadow:inset -1px 0 0 #2e2e2e,inset 0 1px 0 #4c4c4c"></div>
<span class="t" style="left:1150px;top:78px;font-size:11px;font-weight:bold;color:#9c9c9c;width:49px;transform:scaleX(0.9006)">Histogram</span>
<div class="a" style="left:1207px;top:75px;width:62px;height:18px;background:#535353;box-shadow:inset 0 1px 0 #6c6c6c,inset -1px 0 0 #2e2e2e"></div>
<span class="t" style="left:1215px;top:78px;font-size:11px;font-weight:bold;color:#f0f0f0;width:46px;transform:scaleX(0.9064)">Navigator</span>
<svg style="left:1347px;top:79px" width="15" height="9" viewBox="0 0 15 9"><path d="M0 2.500 h5.500 L2.750 6 Z" fill="#e6e6e6"/><path d="M6.500 0.500 h8.500 M6.500 3 h8.500 M6.500 5.500 h8.500 M6.500 8 h8.500" stroke="#e6e6e6" stroke-width="1"/></svg>
<div class="a" style="left:1143px;top:92px;width:223px;height:231px;background:#535353;border-top:1px solid #686868"></div>
<!--NAVTHUMB--><div class="a" id="navthumb" style="left:1148px;top:148px;width:213px;height:120px;background:#fff;overflow:hidden">
<svg style="left:0;top:0" width="213" height="120" viewBox="0 0 213 120">
  <defs>
    <filter id="nb3" x="-30%" y="-30%" width="160%" height="160%"><feGaussianBlur stdDeviation="3"/></filter>
    <filter id="nb6" x="-30%" y="-30%" width="160%" height="160%"><feGaussianBlur stdDeviation="6"/></filter>
    <filter id="nb1" x="-30%" y="-30%" width="160%" height="160%"><feGaussianBlur stdDeviation="1.100"/></filter>
    <linearGradient id="nblue" x1="0" y1="0" x2="0" y2="1"><stop offset="0" stop-color="#7aa4ff"/><stop offset=".18" stop-color="#1862ff"/><stop offset="1" stop-color="#0a5aff"/></linearGradient>
  </defs>
  <rect width="213" height="120" fill="#ffffff"/>
  <g filter="url(#nb6)">
    <ellipse cx="150" cy="42" rx="48" ry="22" fill="#cfb0f0"/>
    <ellipse cx="118" cy="64" rx="56" ry="15" fill="#5a34cc"/>
    <ellipse cx="165" cy="80" rx="38" ry="20" fill="#f2c4e6"/>
    <ellipse cx="105" cy="101" rx="36" ry="13" fill="#f2e24a"/>
    <ellipse cx="160" cy="103" rx="34" ry="11" fill="#f8d8d8"/>
    <ellipse cx="100" cy="48" rx="28" ry="7" fill="#a890ee"/>
    <ellipse cx="40" cy="60" rx="26" ry="40" fill="#ffffff"/>
  </g>
  <g filter="url(#nb3)">
    <ellipse cx="98" cy="68" rx="26" ry="7" fill="#3a18c0"/>
    <ellipse cx="78" cy="48" rx="18" ry="4" fill="#a088e8"/>
    <ellipse cx="150" cy="30" rx="14" ry="7" fill="#b490e4"/>
    <ellipse cx="76" cy="80" rx="6" ry="3" fill="#ffffff"/>
    <ellipse cx="78" cy="94" rx="7" ry="3" fill="#ffffff"/>
    <rect x="12" y="0" width="10" height="112" fill="#b49ae8"/>
    <rect x="16" y="20" width="6" height="36" fill="#9270d8"/>
  </g>
  <g filter="url(#nb1)">
    <ellipse cx="46" cy="66" rx="7" ry="3" fill="#2a50f0"/>
    <rect x="46" y="64" width="6" height="5" fill="#4a18b0"/>
    <rect x="55" y="72" width="6" height="2" fill="#3a3a50"/>
    <rect x="39" y="86" width="9" height="1.500" fill="#6a9a6a"/>
    <path d="M160 53 L176 48" stroke="#6a4a9a" stroke-width="1.500"/>
    <ellipse cx="122" cy="15" rx="2.200" ry="2.800" fill="#54546a"/>
    <path d="M118.500 19 h7 l1.500 12 l-1.500 1 l-1 15 h-2 l-.5 -12 l-1 12 h-2 l-.5 -15 l-1.500 -1 Z" fill="#1c1060"/>
    <path d="M129 34 l6 -7 M127 44 l8 -12" stroke="#f6f0ff" stroke-width="1.500"/>
  </g>
  <rect x="0" y="0" width="8" height="113" fill="url(#nblue)"/>
  <rect x="199" y="0" width="5" height="113" fill="#dca6d6"/>
  <rect x="204" y="0" width="9" height="113" fill="url(#nblue)"/>
  <rect x="79" y="53" width="52" height="9.500" fill="#8a20f4"/>
  <rect x="80.500" y="54.500" width="48" height="6.500" fill="#1280e4"/>
  <rect x="0" y="112" width="213" height="8" fill="#fdfdfd"/>
  <rect x="0" y="111" width="46" height="1" fill="#2a6af0"/>
  <rect x="46" y="111" width="42" height="1" fill="#555"/>
  <rect x="88" y="111" width="112" height="1" fill="#c8c8c8"/>
  <rect x="4" y="105" width="20" height="6" fill="#f4f4f4"/>
  <path d="M7 114.500 l3 1.800 l-3 1.800 Z M16.500 114.500 l3 1.800 l-3 1.800 Z" fill="#111"/>
  <circle cx="26" cy="116.300" r="1.600" fill="#111"/>
  <rect x="173" y="115" width="5" height="2.500" fill="#333"/><rect x="183" y="114.500" width="4" height="3.500" fill="#333"/><circle cx="195.500" cy="116.300" r="1.800" fill="#222"/><rect x="203" y="114.500" width="4" height="3.500" fill="#222"/>
  <circle cx="197.500" cy="5.500" r="2.300" fill="none" stroke="#000" stroke-width="1.300"/>
  <path d="M205.500 6.500 l3.500 -2.500 v3 Z" fill="#123"/>
</svg>
<span class="t" style="left:4px;top:2px;font-size:6px;color:#000;width:84px;filter:blur(.3px);transform:scaleX(0.9143)">डायन या भूत का वीडियो इसने बनाया देखे ,</span>
<svg style="left:0;top:0" width="213" height="120" viewBox="0 0 213 120"><g filter="url(#nb1)" opacity=".9"><path d="M92 5.500 h94" stroke="#111" stroke-width="2.200" stroke-dasharray="5 1.500 8 2 3 1.500 9 2 4 1.500"/><path d="M89 57.800 h32" stroke="#0a0a30" stroke-width="2.400" stroke-dasharray="6 1.500 3 1.500 8 2"/><path d="M5 108 h18" stroke="#111" stroke-width="2" stroke-dasharray="7 1.500 4 1"/><path d="M32 116.300 h14 M94 116.300 h20" stroke="#222" stroke-width="1.800" stroke-dasharray="4 1 6 1.500"/></g></svg>
<div class="a" style="left:89px;top:4px;width:66px;height:51px;border:2px solid #f64646"></div>
</div><!--/NAVTHUMB-->
<div class="a" style="left:1143px;top:323px;width:223px;height:1px;background:#3a3a3a"></div>
<div class="a" style="left:1143px;top:324px;width:223px;height:18px;background:#535353;box-shadow:inset 0 1px 0 #646464"></div>
<svg style="left:1205px;top:329px" width="12" height="8" viewBox="0 0 12 8"><path d="M0.500 7.500 L4 3 L6 5.500 L8 3.500 L11.500 7.500 Z" fill="none" stroke="#c8c8c8" stroke-width="1"/></svg>
<div class="a" style="left:1229px;top:329px;width:89px;height:5px;border-radius:2px;background:#3a3a3a;border:1px solid #2f2f2f;box-shadow:0 1px 0 #6a6a6a"></div>
<svg style="left:1263px;top:330px" width="11" height="10" viewBox="0 0 11 10"><path d="M5.500 0.500 L10 5 V9.500 H1 V5 Z" fill="#c4c4c4" stroke="#3a3a3a" stroke-width="1"/></svg>
<svg style="left:1324px;top:327px" width="19" height="11" viewBox="0 0 19 11"><path d="M0.500 10.500 L6 3 L9 7 L12.500 2.500 L18.500 10.500 Z" fill="none" stroke="#c8c8c8" stroke-width="1.200"/></svg>
<svg style="left:1355px;top:331px" width="10" height="10" viewBox="0 0 10 10"><path d="M9 1 v8 M7 3 v6 M5 5 v4 M3 7 v2" stroke="#777" stroke-width="1" stroke-dasharray="1 1"/></svg>
<div class="a" style="left:1143px;top:345px;width:223px;height:17px;background:#3b3b3b;box-shadow:inset 0 1px 0 #474747"></div>
<div class="a" style="left:1143px;top:345px;width:74px;height:18px;background:#535353;box-shadow:inset 0 1px 0 #6c6c6c,inset -1px 0 0 #2e2e2e"></div>
<span class="t" style="left:1147px;top:348px;font-size:11px;font-weight:bold;color:#f0f0f0;width:62px;transform:scaleX(0.9306)">Adjustments</span>
<svg style="left:1347px;top:349px" width="15" height="9" viewBox="0 0 15 9"><path d="M0 2.500 h5.500 L2.750 6 Z" fill="#e6e6e6"/><path d="M6.500 0.500 h8.500 M6.500 3 h8.500 M6.500 5.500 h8.500 M6.500 8 h8.500" stroke="#e6e6e6" stroke-width="1"/></svg>
<div class="a" style="left:1143px;top:362px;width:223px;height:104px;background:#535353;border-top:1px solid #686868"></div>
<span class="t" style="left:1152px;top:368px;font-size:11px;font-weight:bold;color:#f0f0f0;width:94px;transform:scaleX(0.9493)">Add an adjustment</span>
<!--ADJICONS--><svg width="0" height="0" style="left:0;top:0"><defs><linearGradient id="ag1" x1="0" y1="0" x2="1" y2="1"><stop offset="0" stop-color="#e6e6e6"/><stop offset="1" stop-color="#6a6a6a"/></linearGradient><linearGradient id="ag2" x1="0" y1="0" x2="1" y2="0"><stop offset="0" stop-color="#3e3e3e"/><stop offset="1" stop-color="#dcdcdc"/></linearGradient><linearGradient id="ag3" x1="0" y1="0" x2="0" y2="1"><stop offset="0" stop-color="#d8d8d8"/><stop offset="1" stop-color="#666"/></linearGradient></defs></svg>
<svg style="left:1189px;top:385px" width="18" height="18" viewBox="0 0 18 18"><circle cx="9" cy="9" r="4" fill="#bdbdbd"/><path d="M9 1 v3 M9 14 v3 M1 9 h3 M14 9 h3 M3.300 3.300 l2 2 M12.700 12.700 l2 2 M3.300 14.700 l2 -2 M12.700 5.300 l2 -2" stroke="#bdbdbd" stroke-width="1.200"/></svg>
<svg style="left:1213px;top:385px" width="18" height="18" viewBox="0 0 18 18"><path d="M0.500 14.500 h17 v2.500 h-17 Z" fill="#bdbdbd"/><path d="M1 14 L2 8 L3.500 10 L4.500 4 L6 9 L7.500 3 L9 8 L10.500 2.500 L12 8 L13.500 4 L14.500 9 L16 6 L17 14 Z" fill="#bdbdbd"/></svg>
<svg style="left:1237px;top:385px" width="18" height="18" viewBox="0 0 18 18"><rect x="0.500" y="1.500" width="16" height="15" fill="#5e5e5e" stroke="#9a9a9a" stroke-width="1"/><path d="M0.500 6.500 h16 M0.500 11.500 h16 M6 1.500 v15 M11.500 1.500 v15" stroke="#9a9a9a" stroke-width="1"/><path d="M1 16 C8 16 8 2 16.500 2" fill="none" stroke="#f0f0f0" stroke-width="1.400"/></svg>
<svg style="left:1261px;top:385px" width="18" height="18" viewBox="0 0 18 18"><rect x="0.500" y="1.500" width="16" height="15" fill="#6e6e6e" stroke="#bdbdbd" stroke-width="1"/><path d="M0.500 16.500 L16.500 1.500 V16.500 Z" fill="#dedede"/><path d="M3 6 h5 M5.500 3.500 v5" stroke="#f0f0f0" stroke-width="1.300"/><path d="M10 12.500 h5" stroke="#444" stroke-width="1.300"/></svg>
<svg style="left:1285px;top:385px" width="18" height="18" viewBox="0 0 18 18"><path d="M1 2 h16 L9 16.500 Z" fill="url(#ag3)" stroke="#bdbdbd" stroke-width="1"/></svg>
<svg style="left:1200px;top:412px" width="18" height="18" viewBox="0 0 18 18"><path d="M9 2 v13 M2 5 h14 M5 16 h8" stroke="#bdbdbd" stroke-width="1.300" fill="none"/><path d="M1 11 l2.500 -6 l2.500 6 Z M12 11 l2.500 -6 l2.500 6 Z" fill="#bdbdbd"/></svg>
<svg style="left:1226px;top:412px" width="18" height="18" viewBox="0 0 18 18"><rect x="0.500" y="1.500" width="16" height="15" fill="url(#ag2)" stroke="#bdbdbd" stroke-width="1"/><rect x="1" y="2" width="5" height="14" fill="#4a4a4a"/></svg>
<svg style="left:1249px;top:411px" width="19" height="19" viewBox="0 0 19 19"><path d="M1 4 h3 l1 -2 h5 l1 2 h3 v8 h-13 Z" fill="#8c8c8c" stroke="#bdbdbd" stroke-width="1"/><circle cx="7.500" cy="8" r="2.500" fill="#555" stroke="#bdbdbd" stroke-width="1"/><circle cx="12" cy="13" r="4.500" fill="#707070" stroke="#d8d8d8" stroke-width="1.200"/></svg>
<svg style="left:1273px;top:412px" width="18" height="18" viewBox="0 0 18 18"><circle cx="9" cy="6" r="5" fill="#d4d4d4" opacity=".9"/><circle cx="5.500" cy="11.500" r="5" fill="#a8a8a8" opacity=".9"/><circle cx="12.500" cy="11.500" r="5" fill="#8a8a8a" opacity=".9"/></svg>
<svg style="left:1298px;top:412px" width="18" height="18" viewBox="0 0 18 18"><rect x="0.500" y="2.500" width="16" height="13" fill="#d0d0d0"/><path d="M0.500 6.800 h16 M0.500 11.200 h16 M6 2.500 v13 M11.500 2.500 v13" stroke="#4e4e4e" stroke-width="1.400"/></svg>
<svg style="left:1189px;top:439px" width="18" height="18" viewBox="0 0 18 18"><rect x="0.500" y="1.500" width="16" height="15" fill="#6a6a6a" stroke="#bdbdbd" stroke-width="1"/><path d="M1 2 h15 L1 16 Z" fill="#dcdcdc"/></svg>
<svg style="left:1213px;top:439px" width="18" height="18" viewBox="0 0 18 18"><rect x="0.500" y="1.500" width="16" height="15" fill="#8a8a8a" stroke="#bdbdbd" stroke-width="1"/><path d="M1 12 L9 2 h4 L1 16 Z M7 16 L16 5 v6 l-4 5 Z" fill="#c6c6c6"/></svg>
<svg style="left:1237px;top:439px" width="18" height="18" viewBox="0 0 18 18"><rect x="0.500" y="1.500" width="16" height="15" fill="#c6c6c6" stroke="#bdbdbd" stroke-width="1"/><path d="M1 12 h4 v-3 h4 v-3 h4 v-3 h3.500 v4 h-3 v3 h-4 v3 h-4 v3 h-4.500 Z" fill="#3e3e3e"/></svg>
<svg style="left:1261px;top:439px" width="18" height="18" viewBox="0 0 18 18"><rect x="0.500" y="1.500" width="16" height="15" fill="#8c8c8c" stroke="#bdbdbd" stroke-width="1"/><path d="M1 2 L8.500 9 L1 16 Z M16.500 2 L8.500 9 L16.500 16 Z" fill="#cdcdcd"/></svg>
<svg style="left:1285px;top:439px" width="18" height="18" viewBox="0 0 18 18"><rect x="0.500" y="1.500" width="16" height="15" fill="url(#ag2)" stroke="#bdbdbd" stroke-width="1"/></svg><!--/ADJICONS-->
<div class="a" style="left:1143px;top:468px;width:223px;height:17px;background:#3b3b3b;box-shadow:inset 0 1px 0 #474747"></div>
<div class="a" style="left:1143px;top:468px;width:101px;height:18px;background:#535353;box-shadow:inset 0 1px 0 #6c6c6c,inset -1px 0 0 #2e2e2e"></div>
<span class="t" style="left:1192px;top:471px;font-size:11px;font-weight:bold;color:#f0f0f0;width:46px;transform:scaleX(0.9290)">Channels</span>
<div class="a" style="left:1244px;top:469px;width:40px;height:16px;background:#414141;box-shadow:inset -1px 0 0 #2e2e2e,inset 0 1px 0 #4c4c4c"></div>
<span class="t" style="left:1250px;top:471px;font-size:11px;font-weight:bold;color:#9c9c9c;width:28px;transform:scaleX(0.9343)">Paths</span>
<svg style="left:1347px;top:472px" width="15" height="9" viewBox="0 0 15 9"><path d="M0 2.500 h5.500 L2.750 6 Z" fill="#e6e6e6"/><path d="M6.500 0.500 h8.500 M6.500 3 h8.500 M6.500 5.500 h8.500 M6.500 8 h8.500" stroke="#e6e6e6" stroke-width="1"/></svg>
<div class="a" style="left:1143px;top:485px;width:223px;height:231px;background:#444;border-top:1px solid #5e5e5e"></div>
<div class="a" style="left:1350px;top:486px;width:16px;height:230px;background:linear-gradient(90deg,#3c3c3c,#4b4b4b)"></div>
<div class="a" style="left:1143px;top:487px;width:207px;height:23px;background:#56657a"></div>
<span class="t" style="left:1206px;top:492px;font-size:11px;color:#f4f4f4;width:19px;transform:scaleX(0.7969)">RGB</span>
<span class="t" style="left:1307px;top:492px;font-size:11px;color:#f4f4f4;width:28px;transform:scaleX(0.9442)">Ctrl+2</span>
<div class="a" style="left:1143px;top:511px;width:207px;height:23px;background:#56657a"></div>
<span class="t" style="left:1206px;top:516px;font-size:11px;color:#f4f4f4;width:17px;transform:scaleX(0.8421)">Red</span>
<span class="t" style="left:1307px;top:516px;font-size:11px;color:#f4f4f4;width:28px;transform:scaleX(0.9442)">Ctrl+3</span>
<div class="a" style="left:1143px;top:535px;width:207px;height:23px;background:#56657a"></div>
<span class="t" style="left:1206px;top:540px;font-size:11px;color:#f4f4f4;width:27px;transform:scaleX(0.8830)">Green</span>
<span class="t" style="left:1307px;top:540px;font-size:11px;color:#f4f4f4;width:28px;transform:scaleX(0.9442)">Ctrl+4</span>
<div class="a" style="left:1143px;top:559px;width:207px;height:23px;background:#56657a"></div>
<span class="t" style="left:1206px;top:564px;font-size:11px;color:#f4f4f4;width:19px;transform:scaleX(0.8624)">Blue</span>
<span class="t" style="left:1307px;top:564px;font-size:11px;color:#f4f4f4;width:28px;transform:scaleX(0.9442)">Ctrl+5</span>
<div class="a" style="left:1143px;top:716px;width:223px;height:1px;background:#2e2e2e"></div>
<div class="a" style="left:1143px;top:717px;width:223px;height:19px;background:#535353;box-shadow:inset 0 1px 0 #636363"></div>
<div class="a" style="left:1141px;top:717px;width:63px;height:19px;background:#535353"></div>
<svg style="left:1235px;top:720px" width="12" height="12" viewBox="0 0 12 12"><circle cx="6" cy="6" r="4.800" fill="none" stroke="#e8e8e8" stroke-width="1.300" stroke-dasharray="1.600 1.400"/></svg>
<svg style="left:1264px;top:721px" width="14" height="11" viewBox="0 0 14 11"><rect x="0" y="0" width="14" height="11" fill="#7a7a7a"/><circle cx="7" cy="5.500" r="2.800" fill="#4e4e4e"/></svg>
<svg style="left:1296px;top:720px" width="12" height="12" viewBox="0 0 12 12"><path d="M1 1 h10 v10 h-6 v-4 h-4 Z" fill="#e4e4e4"/><path d="M1 8 l3 3 v-3 Z" fill="#9a9a9a"/></svg>
<svg style="left:1324px;top:719px" width="12" height="14" viewBox="0 0 12 14"><path d="M1 3.500 h10 M4 3 v-1.500 h4 v1.500" fill="none" stroke="#6e6e6e" stroke-width="1.200"/><path d="M2 5 h8 l-.8 8 h-6.400 Z" fill="#6e6e6e"/><path d="M4.500 6.500 v5 M7.500 6.500 v5" stroke="#535353" stroke-width="1"/></svg>
<div class="a" id="dlgshadow" style="left:721px;top:272px;width:484px;height:342px;box-shadow:0 2px 10px 1px rgba(0,0,0,.35)"></div>
<div class="a" id="dlgframe" style="left:721px;top:272px;width:484px;height:342px;background:#ededed;border:1px solid #4a4845;border-top:none"></div>
<div class="a" style="left:721px;top:272px;width:484px;height:26px;background:#4a4845"></div>
<span class="t" style="left:725px;top:279px;font-size:12px;color:#ffffff;width:81px;transform:scaleX(1.0117)">Hue/Saturation</span>
<svg style="left:1183px;top:279px" width="12" height="12" viewBox="0 0 12 12"><path d="M0.700 0.700 L11.300 11.300 M11.300 0.700 L0.700 11.300" stroke="#fff" stroke-width="1.100" fill="none"/></svg>
<span class="t" style="left:732px;top:313px;font-size:12px;color:#000;width:38px;transform:scaleX(0.9996)">Preset:</span>
<div class="inp" style="left:780px;top:308px;width:295px;height:22px"></div>
<span class="t" style="left:785px;top:313px;font-size:12px;color:#000;width:41px;transform:scaleX(0.9917)">Custom</span>
<svg style="left:1061px;top:316px" width="10" height="6" viewBox="0 0 10 6"><path d="M0.800 0.800 L5 5 L9.200 0.800" fill="none" stroke="#444" stroke-width="1.100"/></svg>
<svg style="left:1085px;top:313px" width="14" height="12" viewBox="0 0 14 12"><path d="M1 1.500 h2 M1 4.500 h2 M1 7.500 h2 M4.500 1.500 h7 M4.500 4.500 h7 M4.500 7.500 h7" stroke="#333" stroke-width="1.400"/><path d="M8 9.500 h5 L10.500 12 Z" fill="#333"/></svg>
<div class="btn" style="left:1117px;top:309px;width:76px;height:18px;border:2px solid #0078d7"></div>
<span class="t" style="left:1147px;top:313px;font-size:12px;color:#000;width:16px;transform:scaleX(0.9225)">OK</span>
<div class="btn" style="left:1117px;top:337px;width:76px;height:18px"></div>
<span class="t" style="left:1137px;top:341px;font-size:12px;color:#000;width:36px;transform:scaleX(0.9636)">Cancel</span>
<div class="a" style="left:733px;top:356px;width:365px;height:171px;border:1px solid #a0a0a0;box-shadow:1px 1px 0 #fff,inset 1px 1px 0 #fff"></div>
<div class="a" style="left:747px;top:355px;width:108px;height:4px;background:#ededed"></div>
<div class="inp" style="left:752px;top:348px;width:97px;height:24px"></div>
<span class="t" style="left:759px;top:355px;font-size:12px;color:#000;width:36px;transform:scaleX(0.9813)">Master</span>
<svg style="left:835px;top:357px" width="10" height="6" viewBox="0 0 10 6"><path d="M0.800 0.800 L5 5 L9.200 0.800" fill="none" stroke="#444" stroke-width="1.100"/></svg>
<span class="t" style="left:824px;top:384px;font-size:12px;color:#000;width:26px;transform:scaleX(1.0253)">Hue:</span>
<div class="inp" style="left:966px;top:380px;width:42px;height:20px"></div>
<span class="t" style="left:972px;top:384px;font-size:12px;color:#000;width:22px;transform:scaleX(1.0806)">+33</span>
<div class="a" style="left:817px;top:411px;width:199px;height:5px;border-radius:3px;background:linear-gradient(90deg,#ff2a00 0,#ffea00 13%,#7dff00 25%,#00ff2a 37%,#00ffd0 50%,#008cff 60%,#1a00ff 68%,#a000ff 76%,#ff00e0 85%,#ff0060 93%,#ff2020 100%);box-shadow:inset 0 1px 1px rgba(0,0,0,.5),inset 0 0 0 1px rgba(70,70,70,.35),0 1px 0 #fff"></div>
<svg style="left:943px;top:412px" width="12" height="10" viewBox="0 0 12 10"><path d="M6 0.600 L11 4.500 V9.300 H1 V4.500 Z" fill="#d6d6d6" stroke="#8a8a8a" stroke-width="1" stroke-linejoin="round"/></svg>
<span class="t" style="left:824px;top:432px;font-size:12px;color:#000;width:60px;transform:scaleX(1.0336)">Saturation:</span>
<div class="inp" style="left:966px;top:428px;width:42px;height:20px;border-color:#0078d7"></div>
<div class="a" style="left:971px;top:431px;width:24px;height:14px;background:#0078d7"></div>
<div class="a" style="left:995px;top:431px;width:1px;height:14px;background:#ff9a3c"></div>
<span class="t" style="left:972px;top:432px;font-size:12px;color:#ffffff;width:22px;transform:scaleX(1.0806)">+76</span>
<div class="a" style="left:817px;top:459px;width:199px;height:5px;border-radius:3px;background:linear-gradient(90deg,#808080 0,#a06060 30%,#c04040 60%,#e81818 85%,#ff0000 100%);box-shadow:inset 0 1px 1px rgba(0,0,0,.5),inset 0 0 0 1px rgba(70,70,70,.35),0 1px 0 #fff"></div>
<svg style="left:985px;top:460px" width="12" height="10" viewBox="0 0 12 10"><path d="M6 0.600 L11 4.500 V9.300 H1 V4.500 Z" fill="#d6d6d6" stroke="#8a8a8a" stroke-width="1" stroke-linejoin="round"/></svg>
<span class="t" style="left:824px;top:480px;font-size:12px;color:#000;width:54px;transform:scaleX(0.9871)">Lightness:</span>
<div class="inp" style="left:966px;top:476px;width:42px;height:20px"></div>
<span class="t" style="left:972px;top:480px;font-size:12px;color:#000;width:10px;transform:scaleX(0.9370)">-1</span>
<div class="a" style="left:817px;top:507px;width:199px;height:5px;border-radius:3px;background:linear-gradient(90deg,#000 0,#555 40%,#aaa 65%,#fff 100%);box-shadow:inset 0 1px 1px rgba(0,0,0,.5),inset 0 0 0 1px rgba(70,70,70,.35),0 1px 0 #fff"></div>
<svg style="left:909px;top:508px" width="12" height="10" viewBox="0 0 12 10"><path d="M6 0.600 L11 4.500 V9.300 H1 V4.500 Z" fill="#d6d6d6" stroke="#8a8a8a" stroke-width="1" stroke-linejoin="round"/></svg>
<svg style="left:735px;top:538px" width="22" height="21" viewBox="0 0 19 19.500"><path d="M6.500 18.500 c-1.500 -2 -3 -4 -3.600 -5.300 c-.4 -1.100 1 -1.700 1.800 -.6 l1.300 1.600 V6.300 c0 -1.300 1.800 -1.300 1.800 0 V10.500 V8.800 c0 -1.200 1.800 -1.200 1.800 0 V10.600 V9.600 c0 -1.200 1.700 -1.200 1.700 0 V11 V10.500 c0 -1.100 1.600 -1.100 1.600 0 V14.500 c0 1.700 -.6 3 -1.200 4 Z" fill="#fff" stroke="#111" stroke-width="1"/><path d="M1 5 l3 -2.300 v4.600 Z M15 5 l-3 -2.300 v4.600 Z" fill="#222"/></svg>
<svg style="left:1028px;top:539px" width="18" height="19" viewBox="0 0 18 19"><path d="M1.500 16.500 L1.800 14.500 L8.500 7.800 L10.200 9.500 L3.500 16.200 Z" fill="#f4f4f4" stroke="#9c9c9c" stroke-width="1" stroke-linejoin="round"/><path d="M8 6 L12 10" stroke="#8e8e8e" stroke-width="2" stroke-linecap="round"/><path d="M10.500 7.500 L14 4" stroke="#9a9a9a" stroke-width="3.600" stroke-linecap="round"/></svg>
<svg style="left:1054px;top:539px" width="18" height="19" viewBox="0 0 18 19"><path d="M1.500 16.500 L1.800 14.500 L8.500 7.800 L10.200 9.500 L3.500 16.200 Z" fill="#f4f4f4" stroke="#9c9c9c" stroke-width="1" stroke-linejoin="round"/><path d="M8 6 L12 10" stroke="#8e8e8e" stroke-width="2" stroke-linecap="round"/><path d="M10.500 7.500 L14 4" stroke="#9a9a9a" stroke-width="3.600" stroke-linecap="round"/><path d="M6.500 14.500 h5 M9 12 v5" stroke="#8a8a8a" stroke-width="1"/></svg>
<svg style="left:1080px;top:539px" width="18" height="19" viewBox="0 0 18 19"><path d="M1.500 16.500 L1.800 14.500 L8.500 7.800 L10.200 9.500 L3.500 16.200 Z" fill="#f4f4f4" stroke="#9c9c9c" stroke-width="1" stroke-linejoin="round"/><path d="M8 6 L12 10" stroke="#8e8e8e" stroke-width="2" stroke-linecap="round"/><path d="M10.500 7.500 L14 4" stroke="#9a9a9a" stroke-width="3.600" stroke-linecap="round"/><path d="M7 14.500 h5" stroke="#8a8a8a" stroke-width="1"/></svg>
<div class="a" style="left:1116px;top:526px;width:13px;height:13px;background:#fff;border:1px solid #333"></div>
<span class="t" style="left:1132px;top:527px;font-size:12px;color:#000;width:41px;transform:scaleX(0.9315)">Colorize</span>
<div class="a" style="left:1116px;top:547px;width:13px;height:13px;background:#fff;border:1px solid #333"></div>
<svg style="left:1117px;top:548px" width="11" height="11" viewBox="0 0 11 11"><path d="M1.500 5.500 L4.300 8.500 L9.500 2.500" fill="none" stroke="#111" stroke-width="1.300"/></svg>
<span class="t" style="left:1132px;top:548px;font-size:12px;color:#000;width:42px;transform:scaleX(0.9839)">Preview</span>
<div class="a" style="left:733px;top:575px;width:460px;height:26px;background:#d4d4d4;border-left:1px solid #f4f0e8;border-bottom:1px solid #fbfbfb"></div>
<div class="a" style="left:734px;top:575px;width:459px;height:8px;background:linear-gradient(90deg,#00ffff 0,#0000ff 16.670%,#ff00ff 33.330%,#ff0000 50%,#ffff00 66.670%,#00ff00 83.330%,#00ffff 100%)"></div>
<div class="a" style="left:734px;top:593px;width:459px;height:7px;background:linear-gradient(90deg,#0073ff 0,#0000ff 7.500%,#ff00ff 24.170%,#ff0000 40.830%,#ffff00 57.500%,#00ff00 74.170%,#00ffff 90.830%,#0073ff 100%)"></div>
<div class="a" id="taskbar">
  <!-- start -->
  <svg style="left:9px;top:8px" width="17" height="17" viewBox="0 0 17 17"><path d="M0 2.400 L7.300 1.300 V8 H0 Z M8.300 1.150 L17 0 V8 H8.300 Z M0 9 H7.300 V15.700 L0 14.600 Z M8.300 9 H17 V17 L8.300 15.850 Z" fill="#fff"/></svg>
  <!-- search -->
  <svg style="left:45px;top:7px" width="18" height="18" viewBox="0 0 18 18"><circle cx="11" cy="6.500" r="5.300" fill="none" stroke="#fff" stroke-width="1.500"/><path d="M7.200 10.500 L1 17" stroke="#fff" stroke-width="1.500"/></svg>
  <!-- cortana -->
  <svg style="left:81px;top:7px" width="18" height="18" viewBox="0 0 18 18"><circle cx="9" cy="9" r="7" fill="none" stroke="#fff" stroke-width="2.200"/></svg>
  <div class="a" style="left:114px;top:8px;width:1px;height:17px;background:#6a6a6a"></div>
  <div class="a" style="left:117px;top:8px;width:1px;height:17px;background:#4a4a4a"></div>
  <!-- edge -->
  <svg style="left:140px;top:7px" width="18" height="18" viewBox="0 0 18 18"><defs><linearGradient id="eg" x1="0" y1="0" x2="1" y2="1"><stop offset="0" stop-color="#35c1f1"/><stop offset=".5" stop-color="#1b9de2"/><stop offset="1" stop-color="#0c59a4"/></linearGradient></defs><circle cx="9" cy="9" r="8.500" fill="url(#eg)"/><path d="M2 11 a7 7 0 0 1 14.500 -3 c0 3 -3 3.500 -5.500 3 c1 -3 -3 -4.500 -5 -2 c-1.500 2 0 6 4 7.500 a8 8 0 0 1 -8 -5.500 Z" fill="#52d860" opacity=".85"/><path d="M6 9.500 c1.500 -2.500 5.500 -1.500 5 1.500 c-2 0 -3 1.500 -1 4 c-3 -.5 -5 -3 -4 -5.500 Z" fill="#0a4f94"/></svg>
  <!-- chrome -->
  <svg style="left:177px;top:7px" width="18" height="18" viewBox="0 0 18 18"><circle cx="9" cy="9" r="8.500" fill="#ea4335"/><path d="M9 9 L1.600 4.800 A8.500 8.500 0 0 0 7.500 17.400 Z" fill="#34a853"/><path d="M9 9 L7.500 17.400 A8.500 8.500 0 0 0 16.900 6 L9 6 Z" fill="#fbbc05"/><circle cx="9" cy="9" r="3.900" fill="#fff"/><circle cx="9" cy="9" r="3.100" fill="#4285f4"/></svg>
  <div class="a" style="left:172px;top:30px;width:28px;height:2px;background:#9a9a9a"></div>
  <div class="a" style="left:192px;top:30px;width:8px;height:2px;background:#6e6e6e"></div>
  <!-- rocket -->
  <div class="a" style="left:215px;top:8px;width:17px;height:17px;background:#1e8fe0"></div>
  <svg style="left:215px;top:8px" width="17" height="17" viewBox="0 0 17 17"><path d="M13.500 3 c-3 0 -6 2.500 -7.500 6 l2 2 c3.500 -1.500 6 -4.500 5.500 -8 Z M5.500 9.500 l-2.500 .5 l2 -2.500 Z M7.500 11.500 l-.5 2.500 l2.500 -2 Z M4 13 l1.500 -1.500" fill="#fff" stroke="#fff" stroke-width=".6"/></svg>
  <!-- photoshop (active) -->
  <div class="a" style="left:242px;top:0;width:37px;height:32px;background:#3a3a3a"></div>
  <div class="a" style="left:242px;top:30px;width:37px;height:2px;background:#9a9a9a"></div>
  <div class="a" style="left:252px;top:7px;width:17px;height:17px;background:#0c1248;border:1px solid #8aa6f0"></div>
  <span class="t" style="left:255px;top:10px;font-size:11px;font-weight:bold;color:#9ab4ff;width:11px;transform:scaleX(0.8167)">Ps</span>
  <!-- IE -->
  <svg style="left:287px;top:7px" width="19" height="18" viewBox="0 0 19 18"><circle cx="9.500" cy="9.500" r="6.300" fill="none" stroke="#39a7e8" stroke-width="3.200"/><rect x="5" y="8.500" width="11" height="2.200" fill="#39a7e8"/><rect x="10" y="10.700" width="7" height="3" fill="#1d1d1d"/><ellipse cx="9.500" cy="8.500" rx="10" ry="4" fill="none" stroke="#f2c019" stroke-width="1.500" transform="rotate(-32 9.500 8.500)"/></svg>
  <!-- mail -->
  <svg style="left:325px;top:8px" width="18" height="17" viewBox="0 0 18 17"><path d="M0 6 L9 0 L18 6 V17 H0 Z" fill="#1a7fd6"/><path d="M0 6 L9 12 L18 6 V17 H0 Z" fill="#3aa0ee"/><path d="M0 17 L9 10.500 L18 17 Z" fill="#1268b8"/></svg>
  <!-- office -->
  <svg style="left:362px;top:7px" width="17" height="18" viewBox="0 0 17 18"><path d="M2 4 L11 0.500 L16 2 V16 L11 17.500 L2 14 L11 15 V3.500 L5 5 V12 L2 14 Z" fill="#e8401c"/></svg>
  <!-- explorer -->
  <svg style="left:399px;top:8px" width="19" height="17" viewBox="0 0 19 17"><path d="M0 1 h7 l2 2 h10 v13 h-19 Z" fill="#f4b919"/><path d="M0 5 h19 v11 h-19 Z" fill="#fcd55a"/><rect x="6" y="10" width="7" height="6" fill="#3f8fd6"/></svg>
  <div class="a" style="left:394px;top:30px;width:28px;height:2px;background:#9a9a9a"></div>
  <!-- photos -->
  <svg style="left:436px;top:8px" width="18" height="17" viewBox="0 0 18 17"><rect x="1" y="1" width="16" height="15" fill="#cfe7fb" stroke="#2a92e6" stroke-width="2"/><path d="M2 13 L7 7 L10 10.500 L12.500 8.500 L16 13 V15 H2 Z" fill="#3a79a8"/><path d="M0 0 h4 v1.500 h-2.500 v2.500 h-1.500 Z M18 0 h-4 v1.500 h2.500 v2.500 h1.500 Z M0 17 h4 v-1.500 h-2.500 v-2.500 h-1.500 Z M18 17 h-4 v-1.500 h2.500 v-2.500 h1.500 Z" fill="#2a92e6"/></svg>
  <div class="a" style="left:430px;top:30px;width:28px;height:2px;background:#9a9a9a"></div>
  <!-- tray: help -->
  <svg style="left:923px;top:4px" width="24" height="24" viewBox="0 0 24 24"><circle cx="11" cy="12" r="10" fill="#1e90e0" stroke="#fff" stroke-width="1.800"/><circle cx="19" cy="17.500" r="4" fill="#1e90e0" stroke="#fff" stroke-width="1"/></svg>
  <span class="t" style="left:928px;top:7px;font-size:17px;font-weight:bold;color:#ffffff;width:9px;transform:scaleX(0.8662)">?</span>
  <span class="t" style="left:941px;top:18px;font-size:8px;font-weight:bold;color:#ffffff;width:2px;transform:scaleX(0.8951)">i</span>
  <!-- weather -->
  <svg style="left:974px;top:5px" width="23" height="22" viewBox="0 0 23 22"><path d="M9 1 a6.500 6.500 0 1 0 7 8.500 a5.500 5.500 0 0 1 -7 -8.500 Z" fill="#f6c51c"/><path d="M5 19.500 a4 4 0 0 1 .5 -8 a5 5 0 0 1 9.500 -1 a4.500 4.500 0 0 1 3 9 Z" fill="#e9edf2"/></svg>
  <span class="t" style="left:1005px;top:8px;font-size:15px;width:22px;transform:scaleX(0.8734)">6°C</span>
  <span class="t" style="left:1035px;top:8px;font-size:15px;width:59px;transform:scaleX(0.9433)">Nuvoloso</span>
  <!-- tray icons -->
  <svg style="left:1103px;top:7px" width="16" height="18" viewBox="0 0 16 18"><path d="M2 6 L9 1 L15 4 L8 9 Z" fill="#e8e8e8"/><path d="M2 6 L8 9 V12 L2 9 Z" fill="#bdbdbd"/><path d="M8 9 L15 4 V7 L8 12 Z" fill="#8a8a8a"/><path d="M1 12 h5 v1.200 h-5 Z" fill="#e83030"/><path d="M1 13.200 h6 v1.200 h-6 Z" fill="#f0c020"/><path d="M1 14.400 h7 v1.200 h-7 Z" fill="#30b030"/><path d="M1 15.600 h8 v1.200 h-8 Z" fill="#3070e0"/></svg>
  <svg style="left:1127px;top:7px" width="17" height="18" viewBox="0 0 17 18"><path d="M8 0.500 L15 3 V8 C15 12.500 12 15.500 8 17 C4 15.500 1 12.500 1 8 V3 Z" fill="#f2f2f2"/><path d="M8 0.500 V8.500 H1 V3 Z M8 8.500 H15 C15 12.500 12 15.500 8 17 Z" fill="#2a2a2a" opacity=".88"/><circle cx="12.500" cy="13.500" r="4" fill="#18a84a"/><path d="M10.500 13.500 l1.500 1.500 l2.500 -3" fill="none" stroke="#fff" stroke-width="1.200"/></svg>
  <div class="a" style="left:1151px;top:8px;width:16px;height:16px;background:#e01622"></div>
  <svg style="left:1151px;top:8px" width="16" height="16" viewBox="0 0 16 16"><path d="M3 12.500 C4 6 8 3.500 10 6 C11.500 8 12 10.500 13 12 M5 10 C8 8 10 9 12 11" fill="none" stroke="#fff" stroke-width="1.500"/></svg>
  <svg style="left:1173px;top:9px" width="20" height="14" viewBox="0 0 20 14"><rect x="6.500" y="3.500" width="11" height="7" fill="none" stroke="#fff" stroke-width="1.200"/><rect x="8" y="5" width="6" height="4" fill="#fff"/><rect x="18" y="5.500" width="1.500" height="3" fill="#fff"/><path d="M1 4 h4 v3 h-1.500 v3 M1.500 2 v2 M4 2 v2" fill="none" stroke="#fff" stroke-width="1.100"/></svg>
  <svg style="left:1200px;top:8px" width="17" height="16" viewBox="0 0 17 16"><path d="M2 15 a13 13 0 0 1 13 -13" fill="none" stroke="#8a8a8a" stroke-width="1.300"/><path d="M6 15 a9 9 0 0 1 9 -9" fill="none" stroke="#a8a8a8" stroke-width="1.300"/><path d="M10 15 a5 5 0 0 1 5 -5" fill="none" stroke="#d0d0d0" stroke-width="1.300"/><circle cx="14.500" cy="14.500" r="1.300" fill="#fff"/></svg>
  <svg style="left:1222px;top:9px" width="17" height="14" viewBox="0 0 17 14"><path d="M1 5 h2.500 l3.500 -3.500 v11 l-3.500 -3.500 h-2.500 Z" fill="none" stroke="#fff" stroke-width="1.100"/><path d="M10.500 4.500 l5 5 M15.500 4.500 l-5 5" stroke="#fff" stroke-width="1.100"/></svg>
  <span class="t" style="left:1264px;top:3px;font-size:12px;width:28px;transform:scaleX(0.9324)">03:56</span>
  <span class="t" style="left:1249px;top:18px;font-size:12px;width:58px;transform:scaleX(0.9657)">14/02/2022</span>
  <svg style="left:1325px;top:7px" width="18" height="18" viewBox="0 0 18 18"><path d="M1 1 h15 v11 h-10 l-3 3 v-3 h-2 Z" fill="#fff"/><path d="M3.500 4 h10 M3.500 6.500 h10 M3.500 9 h6" stroke="#1d1d1d" stroke-width="1"/><circle cx="13.500" cy="13.500" r="3.300" fill="#1d1d1d" stroke="#fff" stroke-width="1"/><path d="M12 15 l3 -3" stroke="#fff" stroke-width="1"/></svg>
</div>
</body>
</html>
